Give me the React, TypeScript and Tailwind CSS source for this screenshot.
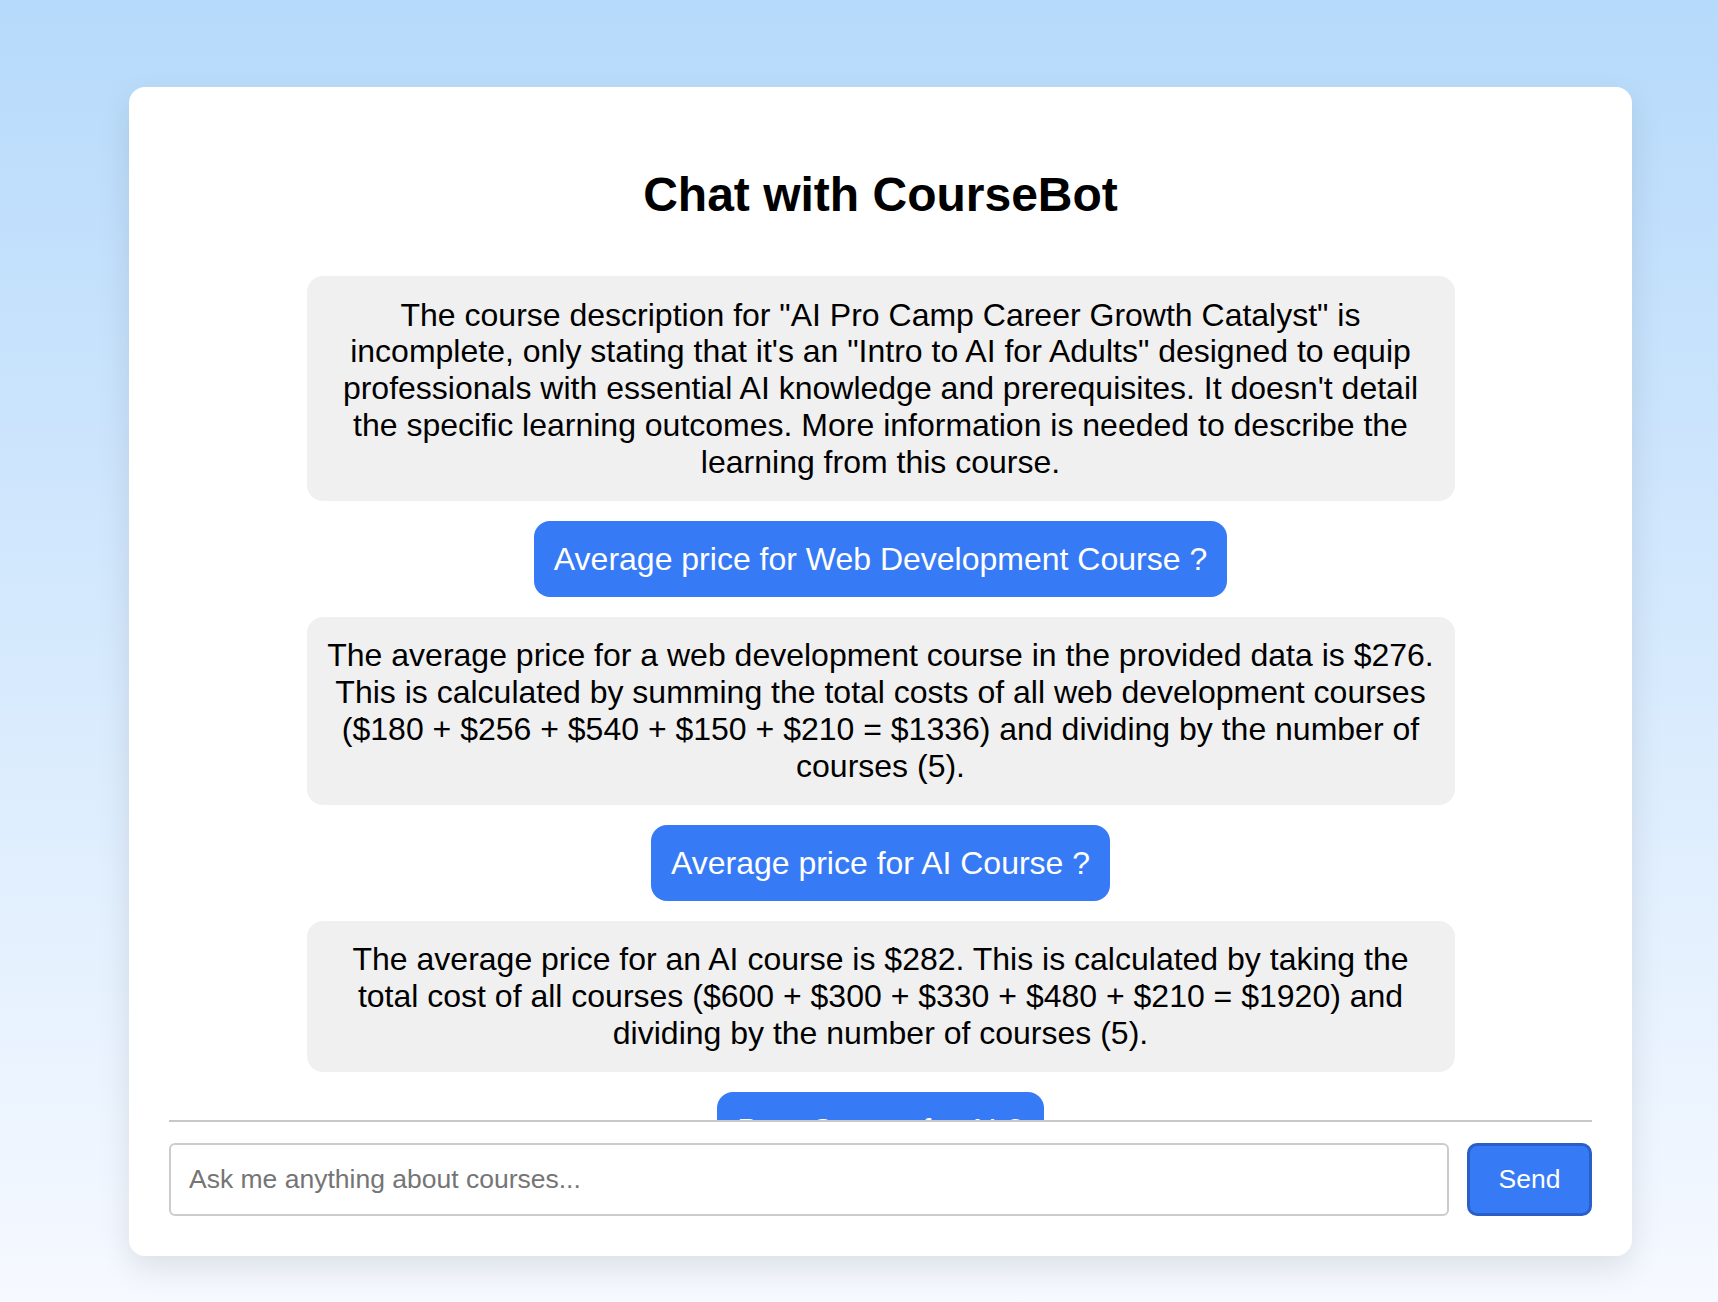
import React, { useState } from 'react';

type Msg = { id: number; from: 'bot' | 'user'; text: string };

const initialMessages: Msg[] = [
  {
    id: 1,
    from: 'bot',
    text: 'The course description for "AI Pro Camp Career Growth Catalyst" is incomplete, only stating that it\'s an "Intro to AI for Adults" designed to equip professionals with essential AI knowledge and prerequisites. It doesn\'t detail the specific learning outcomes. More information is needed to describe the learning from this course.',
  },
  { id: 2, from: 'user', text: 'Average price for Web Development Course ?' },
  {
    id: 3,
    from: 'bot',
    text: 'The average price for a web development course in the provided data is $276. This is calculated by summing the total costs of all web development courses ($180 + $256 + $540 + $150 + $210 = $1336) and dividing by the number of courses (5).',
  },
  { id: 4, from: 'user', text: 'Average price for AI Course ?' },
  {
    id: 5,
    from: 'bot',
    text: 'The average price for an AI course is $282. This is calculated by taking the total cost of all courses ($600 + $300 + $330 + $480 + $210 = $1920) and dividing by the number of courses (5).',
  },
  { id: 6, from: 'user', text: 'Best Course for AI ?' },
];

function Bubble({ msg }: { msg: Msg }) {
  if (msg.from === 'user') {
    return (
      <div className="shrink-0 max-w-[1148px] rounded-2xl bg-[#377af5] px-5 py-[19.5px] text-center text-[32px] leading-[1.15] text-white">
        {msg.text}
      </div>
    );
  }
  return (
    <div className="shrink-0 max-w-[1148px] rounded-2xl bg-[#f0f0f0] px-5 py-[20.5px] text-center text-[32px] leading-[1.15] text-black">
      {msg.text}
    </div>
  );
}

export default function App() {
  const [messages, setMessages] = useState<Msg[]>(initialMessages);
  const [input, setInput] = useState('');

  const send = () => {
    if (!input.trim()) return;
    setMessages(prev => [...prev, { id: Date.now(), from: 'user', text: input }]);
    setInput('');
  };

  return (
    <div
      className="min-h-screen w-full bg-gradient-to-b from-[#b6dafb] to-[#f6f9ff] pt-[87px] pb-[40px]"
      style={{ fontFamily: '"Liberation Sans", Arial, sans-serif' }}
    >
      <div className="ml-[129px] flex w-[1503px] flex-col rounded-2xl bg-white px-10 pt-10 pb-10 shadow-[0_12px_32px_rgba(0,0,0,0.10)]">
        <h1 className="mt-10 mb-[54px] text-center text-[48px] font-bold leading-[1.15] text-black">
          Chat with CourseBot
        </h1>

        <div className="flex h-[846px] flex-col items-center gap-5 overflow-hidden border-b-2 border-[#c8c8c8]">
          {messages.map(m => (
            <Bubble key={m.id} msg={m} />
          ))}
        </div>

        <div className="mt-[21px] flex items-stretch gap-[18px]">
          <input
            value={input}
            onChange={e => setInput(e.target.value)}
            onKeyDown={e => e.key === 'Enter' && send()}
            placeholder="Ask me anything about courses..."
            className="h-[73px] flex-1 rounded-md border-2 border-[#cccccc] bg-white px-[18px] text-[26.5px] text-black outline-none placeholder:text-[#757575]"
          />
          <button
            onClick={send}
            className="h-[73px] w-[125px] rounded-[10px] border-[3px] border-[#2a5fc7] bg-[#377af5] text-[26.5px] text-white"
          >
            Send
          </button>
        </div>
      </div>
    </div>
  );
}
